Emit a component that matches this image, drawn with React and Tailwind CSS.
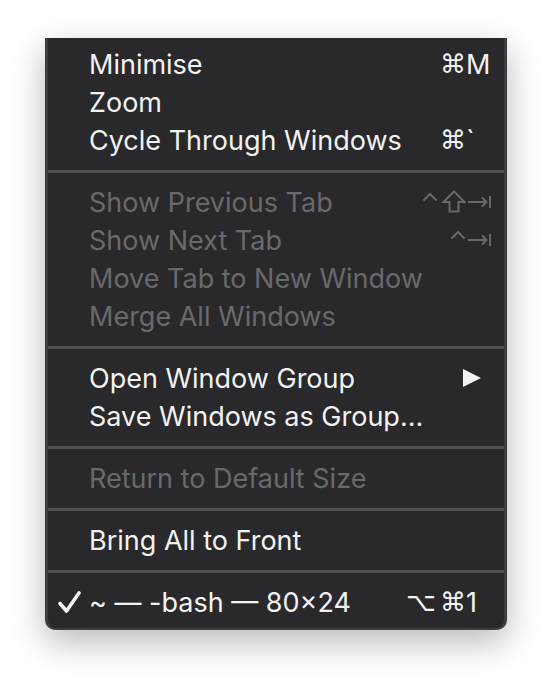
import React from 'react';

const ON = '#f2f2f2';
const OFF = '#69696b';

// small drawn glyphs for the shortcut column
function Ctrl({ color }) {
  return (
    <svg width="16" height="10" viewBox="0 0 16 10" className="mb-[10px]">
      <polyline points="1.5,8.5 8,2 14.5,8.5" fill="none" stroke={color} strokeWidth="2" />
    </svg>
  );
}

function Shift({ color }) {
  return (
    <svg width="24" height="23" viewBox="0 0 24 23" className="mb-[1px]">
      <polygon
        points="12,1.5 22.5,12 16.5,12 16.5,21.5 7.5,21.5 7.5,12 1.5,12"
        fill="none"
        stroke={color}
        strokeWidth="2"
        strokeLinejoin="miter"
      />
    </svg>
  );
}

function Tab({ color }) {
  return (
    <svg width="24" height="12" viewBox="0 0 24 12" className="ml-[2px]">
      <line x1="0" y1="6" x2="19" y2="6" stroke={color} strokeWidth="2" />
      <polyline points="14,1.5 18.5,6 14,10.5" fill="none" stroke={color} strokeWidth="2" />
      <line x1="22" y1="0" x2="22" y2="12" stroke={color} strokeWidth="2" />
    </svg>
  );
}

function Check() {
  return (
    <svg width="23" height="23" viewBox="0 0 23 23">
      <path d="M2 12.5 L8.5 20 L21 2" fill="none" stroke={ON} strokeWidth="3.6" strokeLinecap="round" strokeLinejoin="round" />
    </svg>
  );
}

function Shortcut({ mods, keyChar, color }) {
  return (
    <div className="flex items-center" style={{ color }}>
      <div className="flex items-center justify-end gap-[4px]">{mods}</div>
      <div className="w-[28px] flex items-center">{keyChar}</div>
    </div>
  );
}

function Row({ label, disabled, right, check }) {
  const color = disabled ? OFF : ON;
  return (
    <div className="h-[38px] flex items-center pl-[10px] pr-[10px]">
      <div className="w-[31px] flex items-center">{check ? <Check /> : null}</div>
      <div className="flex-1 whitespace-nowrap" style={{ color }}>
        {label}
      </div>
      {right}
    </div>
  );
}

function Sep() {
  return (
    <div className="h-[24px] flex items-center">
      <div className="h-[3px] w-full bg-[#4f4f51]" />
    </div>
  );
}

const sym = "font-['DejaVu_Sans',sans-serif] text-[26px]";

export default function App() {
  return (
    <div className="w-[552px] h-[684px] bg-white overflow-hidden pt-[38px] font-['Inter','Noto_Sans',sans-serif] text-[27px] leading-none">
      <div className="ml-[45px] w-[462px] bg-[#29292b] border-x-[3px] border-b-[2px] border-[#3d3d3f] rounded-b-[10px] pt-[7px] pb-[7px] shadow-[0_12px_34px_rgba(0,0,0,0.28)]">
        <Row
          label="Minimise"
          right={<Shortcut color={ON} mods={<span className={sym}>⌘</span>} keyChar={<span>M</span>} />}
        />
        <Row label="Zoom" />
        <Row
          label="Cycle Through Windows"
          right={<Shortcut color={ON} mods={<span className={sym}>⌘</span>} keyChar={<span>`</span>} />}
        />
        <Sep />
        <Row
          label="Show Previous Tab"
          disabled
          right={
            <Shortcut
              color={OFF}
              mods={
                <>
                  <Ctrl color={OFF} />
                  <Shift color={OFF} />
                </>
              }
              keyChar={<Tab color={OFF} />}
            />
          }
        />
        <Row
          label="Show Next Tab"
          disabled
          right={<Shortcut color={OFF} mods={<Ctrl color={OFF} />} keyChar={<Tab color={OFF} />} />}
        />
        <Row label="Move Tab to New Window" disabled />
        <Row label="Merge All Windows" disabled />
        <Sep />
        <Row
          label="Open Window Group"
          right={
            <svg width="20" height="20" viewBox="0 0 20 20" className="mr-[12px]">
              <polygon points="1,1 19,10 1,19" fill={ON} />
            </svg>
          }
        />
        <Row label="Save Windows as Group…" />
        <Sep />
        <Row label="Return to Default Size" disabled />
        <Sep />
        <Row label="Bring All to Front" />
        <Sep />
        <Row
          check
          label="~ — -bash — 80×24"
          right={
            <Shortcut
              color={ON}
              mods={
                <>
                  <span className={sym}>⌥</span>
                  <span className={sym}>⌘</span>
                </>
              }
              keyChar={<span>1</span>}
            />
          }
        />
      </div>
    </div>
  );
}
